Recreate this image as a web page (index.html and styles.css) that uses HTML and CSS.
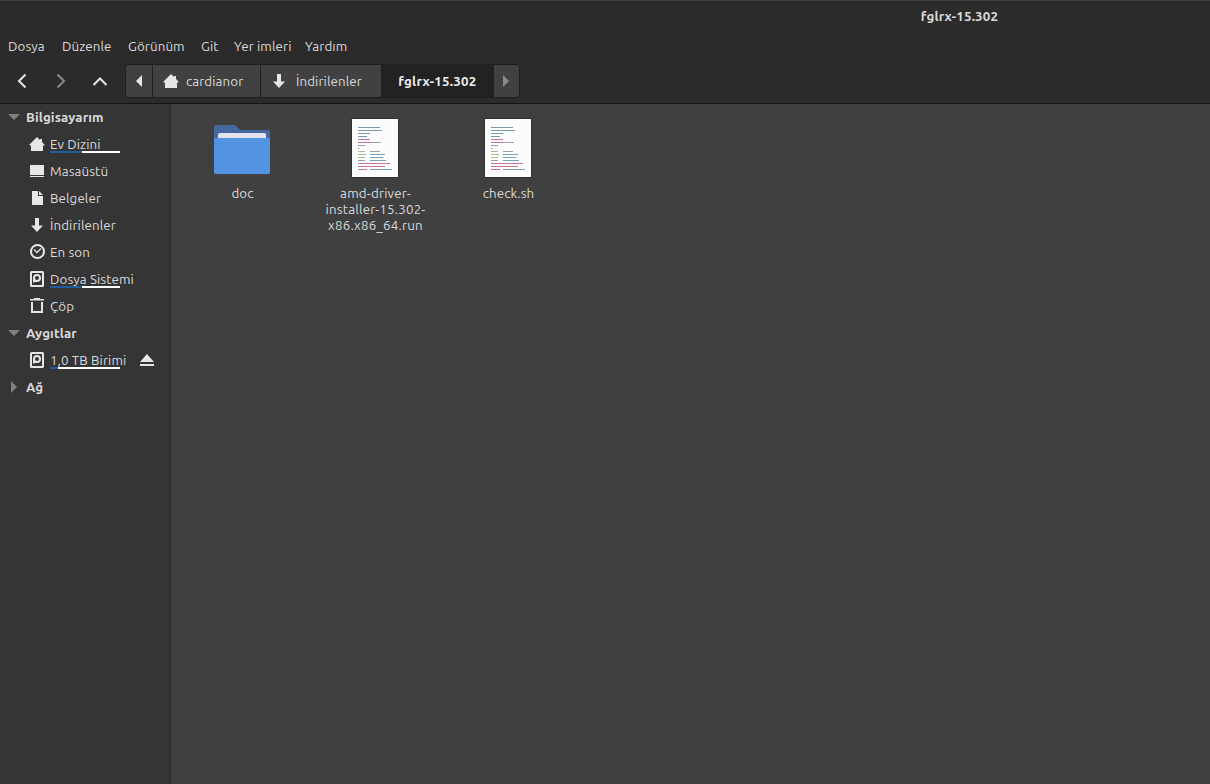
FILE: index.html
```html
<!DOCTYPE html>
<html lang="tr">
  <head>
    <meta charset="UTF-8" />
    <meta name="viewport" content="width=device-width, initial-scale=1.0" />
    <title>fglrx-15.302</title>
    <link rel="stylesheet" href="styles.css">
  </head>
  <body>
    <!-- Shared icons -->
    <svg class="sprite">
      <symbol id="home" viewBox="0 0 16 16">
        <path d="M8 1 L0.5 8.5 V9.5 H2 V15 H14 V9.5 H15.5 V8.5 L13 6 V3 H11 V4 Z" />
      </symbol>
      <symbol id="down" viewBox="0 0 16 16">
        <path d="M6 1 H10 V8.5 H14 L8 15 L2 8.5 H6 Z" />
      </symbol>
      <symbol id="disk" viewBox="0 0 16 16">
        <path fill-rule="evenodd" d="M2.5 0 H13.5 Q15 0 15 1.5 V14.5 Q15 16 13.5 16 H2.5 Q1 16 1 14.5 V1.5 Q1 0 2.5 0 Z M3 2 V14 H13 V2 Z" />
        <path fill-rule="evenodd" d="M4 11.5 V7 A4 4 0 1 1 8 11 H6 L5 11.5 Z M8 5 A2 2 0 1 0 8 9 A2 2 0 1 0 8 5 Z" />
      </symbol>
      <symbol id="code" viewBox="0 0 48 60">
        <rect x="0.5" y="0.5" width="47" height="59" fill="#fcfcfc" stroke="#303030" />
        <g fill="none" stroke-width="1" opacity="0.7">
          <path stroke="#416f8e" d="M7 9.5 H29 M7 12.5 H31 M7 15.5 H19 M7 18.5 H16" />
          <path stroke="#ad3e72" d="M7 21.5 H19 M7 24.5 H20 M7 45.5 H39 M7 48.5 H34 M7 51.5 H16" />
          <path stroke="#73788a" d="M20 24.5 H30 M7 27.5 H14 M7 30.5 H8.5 M19 33.5 H29 M7 42.5 H14" />
          <path stroke="#77ac65" d="M7 33.5 H14 M7 36.5 H15 M7 39.5 H14" />
          <path stroke="#3f7ba8" d="M19 36.5 H34 M19 39.5 H32 M19 42.5 H35 M19 51.5 H41" />
        </g>
      </symbol>
    </svg>

    <header class="titlebar">
      <h1 class="title">fglrx-15.302</h1>
    </header>

    <nav class="menubar">
      <span>Dosya</span>
      <span>Düzenle</span>
      <span>Görünüm</span>
      <span>Git</span>
      <span>Yer imleri</span>
      <span>Yardım</span>
    </nav>

    <div class="toolbar">
      <div class="nav-buttons">
        <svg class="icon" viewBox="0 0 16 16"><path class="stroke" d="M11.5 1.5 L5 8 L11.5 14.5" /></svg>
        <svg class="icon disabled" viewBox="0 0 16 16"><path class="stroke" d="M4.5 1.5 L11 8 L4.5 14.5" /></svg>
        <svg class="icon" viewBox="0 0 16 16"><path class="stroke" d="M1.5 12 L8 5.5 L14.5 12" /></svg>
      </div>
      <div class="pathbar">
        <button class="crumb arrow"><svg viewBox="0 0 6 12"><path d="M6 0 V12 L0 6 Z" /></svg></button>
        <button class="crumb user"><svg class="icon"><use href="#home" /></svg><span>cardianor</span></button>
        <button class="crumb downloads"><svg class="icon"><use href="#down" /></svg><span>İndirilenler</span></button>
        <button class="crumb current"><span>fglrx-15.302</span></button>
        <button class="crumb arrow next"><svg viewBox="0 0 6 12"><path d="M0 0 V12 L6 6 Z" /></svg></button>
      </div>
    </div>

    <div class="content">
      <aside class="sidebar">
        <div class="heading"><svg class="expander" viewBox="0 0 12 12"><path d="M0 3 H12 L6 9 Z" /></svg><span>Bilgisayarım</span></div>
        <div class="place">
          <svg class="icon"><use href="#home" /></svg>
          <span class="label usage">Ev Dizini</span>
        </div>
        <div class="place">
          <svg class="icon" viewBox="0 0 16 16"><path d="M1 2 H15 V12 H1 Z M1 13 H15 V14 H1 Z" /></svg>
          <span class="label">Masaüstü</span>
        </div>
        <div class="place">
          <svg class="icon" viewBox="0 0 16 16"><path d="M3 1 H9 V6 H14 V15 H3 Z M10 1 L14 5 H10 Z" /></svg>
          <span class="label">Belgeler</span>
        </div>
        <div class="place">
          <svg class="icon"><use href="#down" /></svg>
          <span class="label">İndirilenler</span>
        </div>
        <div class="place">
          <svg class="icon" viewBox="0 0 16 16">
            <circle class="stroke" cx="8.5" cy="7.5" r="6.5" />
            <path class="stroke thin" d="M5 5.5 L8 8.5 L12 4.5" />
          </svg>
          <span class="label">En son</span>
        </div>
        <div class="place">
          <svg class="icon"><use href="#disk" /></svg>
          <span class="label usage">Dosya Sistemi</span>
        </div>
        <div class="place">
          <svg class="icon" viewBox="0 0 16 16"><path fill-rule="evenodd" d="M1 1 H5 V0 H11 V1 H15 V2.5 H1 Z M2 4 H4 V13 H12 V4 H14 V15 H2 Z" /></svg>
          <span class="label">Çöp</span>
        </div>
        <div class="heading"><svg class="expander" viewBox="0 0 12 12"><path d="M0 3 H12 L6 9 Z" /></svg><span>Aygıtlar</span></div>
        <div class="place">
          <svg class="icon"><use href="#disk" /></svg>
          <span class="label usage volume">1,0 TB Birimi</span>
          <svg class="icon eject" viewBox="0 0 16 16"><path d="M8 2 L15 10 H1 Z M1 12 H15 V14 H1 Z" /></svg>
        </div>
        <div class="heading"><svg class="expander" viewBox="0 0 12 12"><path d="M3 0 L9 6 L3 12 Z" /></svg><span>Ağ</span></div>
      </aside>

      <main class="files">
        <div class="file">
          <svg class="thumb" viewBox="0 0 60 60">
            <path fill="#43699f" d="M4 7 H22 Q24 7 25 9 L28 12 H56 Q58 12 58 14 V30 H2 V9 Q2 7 4 7 Z" />
            <path fill="#e4e3ef" d="M6 23 V17 Q6 15 8 15 H52 Q54 15 54 17 V23 Z" />
            <path fill="#5294e2" d="M2 21 Q2 20 3 20 H57 Q58 20 58 21 V54 Q58 56 56 56 H4 Q2 56 2 54 Z" />
          </svg>
          <span class="name">doc</span>
        </div>
        <div class="file">
          <svg class="thumb page"><use href="#code" /></svg>
          <span class="name long">amd-driver-<br />installer-15.302-<br />x86.x86_64.run</span>
        </div>
        <div class="file">
          <svg class="thumb page"><use href="#code" /></svg>
          <span class="name">check.sh</span>
        </div>
      </main>
    </div>
  </body>
</html>
```

FILE: styles.css
```css
* {
  box-sizing: border-box;
}
body {
  margin: 0;
  height: 784px;
  overflow: hidden;
  display: flex;
  flex-direction: column;
  background-color: #2b2b2b;
  color: #dadada;
  font-family: Ubuntu, "Noto Sans", sans-serif;
  font-size: 13.33px;
  letter-spacing: 0.1px;
  white-space: nowrap;
}
svg {
  display: block;
  flex: none;
  fill: #e6e6e6;
}
.sprite {
  position: absolute;
  width: 0;
  height: 0;
}
.icon {
  width: 16px;
  height: 16px;
}
.stroke {
  fill: none;
  stroke: #e6e6e6;
  stroke-width: 2;
}
.thin {
  stroke-width: 1.3;
}
.disabled {
  opacity: 0.5;
}

/* Title and menus */
.titlebar {
  height: 33px;
  border-top: 1px solid #424242;
  padding-left: 709px;
  text-align: center;
}
.title {
  margin: 0;
  font-size: 13.33px;
  line-height: 31px;
  font-weight: 600;
  letter-spacing: 0.17px;
}
.menubar {
  display: grid;
  grid-template-columns: 54px 66px 73px 33px 71px auto;
  height: 27px;
  padding-left: 8px;
  line-height: 27px;
}

/* Toolbar */
.toolbar {
  display: flex;
  height: 44px;
  padding-top: 4px;
  border-bottom: 1px solid #141414;
}
.nav-buttons {
  display: flex;
  align-items: center;
  gap: 23px;
  width: 125px;
  height: 34px;
  padding-left: 14px;
}
.pathbar {
  display: flex;
  width: 395px;
  height: 34px;
  border: 1px solid #1e1e1e;
  border-radius: 3px;
  overflow: hidden;
}
.crumb {
  display: flex;
  align-items: center;
  padding: 0;
  border: none;
  border-right: 1px solid #202020;
  background-color: #414141;
  color: #dadada;
  font: inherit;
  letter-spacing: inherit;
}
.arrow {
  width: 27px;
  padding-left: 10px;
}
.arrow svg {
  width: 6px;
  height: 12px;
}
.user {
  width: 108px;
  padding-left: 10px;
  gap: 7px;
}
.downloads {
  width: 121px;
  padding-left: 10px;
  gap: 9px;
}
.current {
  width: 112px;
  justify-content: center;
  background-color: #222;
  color: #eee;
  font-weight: bold;
  letter-spacing: 0.25px;
}
.next {
  width: 25px;
  padding-left: 9px;
  border-right: none;
}
.next svg {
  fill: #8b8b8b;
}

/* Sidebar */
.content {
  display: flex;
  flex: 1;
}
.sidebar {
  width: 171px;
  background-color: #353535;
  border-right: 1px solid #292929;
}
.heading {
  display: flex;
  align-items: center;
  height: 27px;
  padding: 0 0 1px 8px;
  gap: 6px;
  font-weight: bold;
  line-height: 18px;
}
.heading span {
  padding-top: 2px;
}
.expander {
  width: 12px;
  height: 12px;
  fill: #808080;
}
.place {
  display: flex;
  align-items: center;
  height: 27px;
  padding: 0 0 1px 29px;
  gap: 5px;
}
.label {
  height: 18px;
  line-height: 19px;
}
/* disk usage bar below the label */
.usage {
  background: linear-gradient(to right, #215d9c 32px, #fff 32px) 0 100% / 70px 2px no-repeat;
  min-width: 70px;
}
.volume {
  width: 78px;
  background-image: linear-gradient(to right, #215d9c 8px, #fff 8px);
}
.eject {
  margin-left: 6px;
}

/* Files */
.files {
  display: flex;
  flex: 1;
  align-items: flex-start;
  padding: 14px 0 0 4.5px;
  background-color: #404040;
}
.file {
  display: flex;
  flex-direction: column;
  align-items: center;
  width: 133px;
}
.thumb {
  width: 60px;
  height: 60px;
}
.page {
  width: 48px;
}
.name {
  margin-top: 8px;
  padding-left: 1px;
  line-height: 16px;
  text-align: center;
}
.long {
  letter-spacing: 0.2px;
}
```
